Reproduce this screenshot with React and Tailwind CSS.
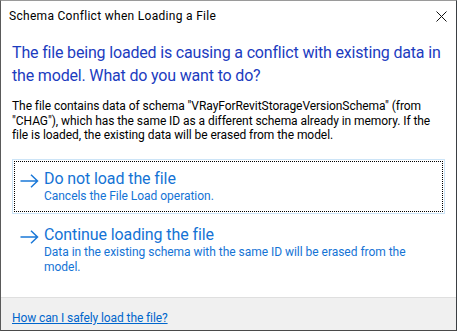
import React from "react";

const font = { fontFamily: 'Roboto, "Noto Sans", sans-serif' };

function Arrow() {
  return (
    <svg width="19" height="14" viewBox="0 0 19 14" className="shrink-0">
      <path d="M0.5 7 H17.5 M11 0.8 L17.5 7 L11 13.2" fill="none" stroke="#1a78d8" strokeWidth="1.5" />
    </svg>
  );
}

function CommandLink({ title, children, focused }) {
  const inner = (
    <div className={"flex pl-[4px] pt-[7px] pb-[7px] " + (focused ? "border border-dotted border-black" : "border border-transparent")}>
      <div className="w-[25px] flex pt-[5px] pl-[1px]">
        <Arrow />
      </div>
      <div className="flex flex-col">
        <div className="text-[16px] leading-[20px] tracking-[-0.1px] text-[#1473d5] whitespace-nowrap">{title}</div>
        <div className="text-[12px] leading-[15px] tracking-[-0.03px] text-[#1473d5] whitespace-nowrap">{children}</div>
      </div>
    </div>
  );
  return (
    <div className={"p-[1px] border " + (focused ? "border-[#cce4f7]" : "border-transparent")}>
      {inner}
    </div>
  );
}

export default function App() {
  return (
    <div
      style={font}
      className="w-[457px] h-[331px] flex flex-col bg-white border-t border-t-[#9a9a9a] border-l border-l-[#5a5a5a] border-r border-r-[#3b3f43] border-b border-b-[#4a4a4a] overflow-hidden"
    >
      <div className="h-[30px] shrink-0 flex items-center justify-between pl-[8px] pr-[9px]">
        <span className="text-[12px] tracking-[0.3px] text-black whitespace-nowrap">Schema Conflict when Loading a File</span>
        <svg width="11" height="11" viewBox="0 0 11 11">
          <path d="M0.5 0.5 L10.5 10.5 M10.5 0.5 L0.5 10.5" stroke="#111" strokeWidth="1" fill="none" />
        </svg>
      </div>
      <div className="flex flex-col px-[11px] pt-[10px]">
        <div className="text-[16px] leading-[23px] tracking-[-0.17px] text-[#1c3cbf] whitespace-nowrap">
          The file being loaded is causing a conflict with existing data in
          <br />
          the model. What do you want to do?
        </div>
        <div className="mt-[12px] text-[12px] leading-[14.5px] tracking-[-0.06px] text-black whitespace-nowrap">
          The file contains data of schema "VRayForRevitStorageVersionSchema" (from
          <br />
          "CHAG"), which has the same ID as a different schema already in memory. If the
          <br />
          file is loaded, the existing data will be erased from the model.
        </div>
        <div className="mt-[16px] flex flex-col gap-[1px]">
          <CommandLink focused title="Do not load the file">
            Cancels the File Load operation.
          </CommandLink>
          <CommandLink title="Continue loading the file">
            Data in the existing schema with the same ID will be erased from the
            <br />
            model.
          </CommandLink>
        </div>
      </div>
      <div className="mt-auto h-[33px] shrink-0 bg-[#f0f0f0] border-t border-t-[#dfdfdf] px-[11px] pt-[7px]">
        <a href="#" className="text-[12px] leading-[15px] tracking-[-0.1px] text-[#0066cc] underline whitespace-nowrap">
          How can I safely load the file?
        </a>
      </div>
    </div>
  );
}
